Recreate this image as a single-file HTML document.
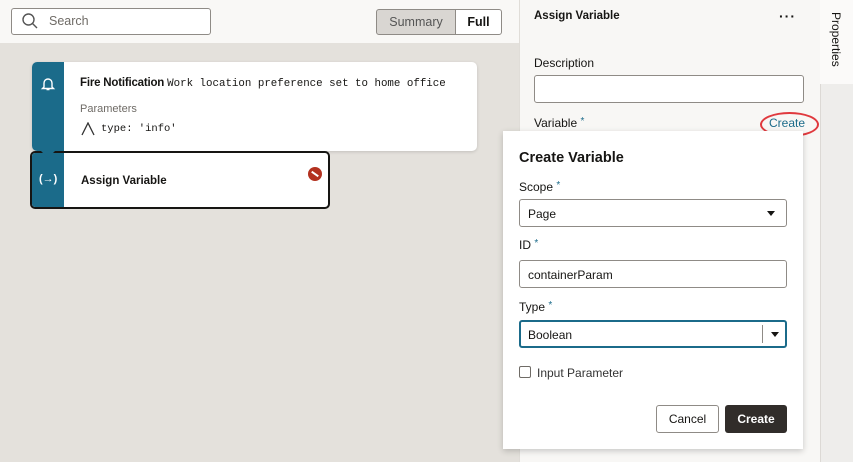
<!DOCTYPE html>
<html><head><style>
*{box-sizing:border-box;margin:0;padding:0}
body{width:853px;height:462px;overflow:hidden;font-family:"Liberation Sans",sans-serif;background:#e4e1dc;position:relative;color:#161513}
.abs{position:absolute}
.mono{font-family:"Liberation Mono",monospace}
</style></head><body>
<div class="abs" style="left:0;top:0;width:519px;height:43px;background:#f9f8f6"></div>
<div class="abs" style="left:11px;top:8px;width:200px;height:27px;border:1px solid #8f8b86;border-radius:3px;background:#fff"></div>
<svg class="abs" style="left:21px;top:12px" width="18" height="18" viewBox="0 0 18 18"><circle cx="7.5" cy="7.5" r="5.5" fill="none" stroke="#555" stroke-width="1.4"/><line x1="11.5" y1="11.5" x2="16" y2="16" stroke="#555" stroke-width="1.4"/></svg>
<div class="abs" style="left:49px;top:14px;font-size:12.5px;color:#6f6b66">Search</div>
<div class="abs" style="left:376px;top:9px;width:80px;height:26px;background:#d9d6d2;border:1px solid #8f8b86;border-radius:3px 0 0 3px;font-size:12.5px;color:#555;text-align:center;line-height:24px">Summary</div>
<div class="abs" style="left:455px;top:9px;width:47px;height:26px;background:#fff;border:1px solid #8f8b86;border-radius:0 3px 3px 0;font-size:12.5px;font-weight:bold;text-align:center;line-height:24px">Full</div>

<div class="abs" style="left:32px;top:62px;width:445px;height:89px;background:#fff;border-radius:5px;box-shadow:0 1px 3px rgba(0,0,0,.15);overflow:hidden">
 <div class="abs" style="left:0;top:0;width:32px;height:89px;background:#1b6b8a"></div>
 <svg class="abs" style="left:8px;top:14px" width="16" height="16" viewBox="0 0 16 16"><path d="M4 11V7a4 4 0 0 1 8 0v4l1.5 1.5h-11z M6.5 13.5h3" fill="none" stroke="#fff" stroke-width="1.4"/></svg>
 <div class="abs" style="left:48px;top:15px;font-size:11.5px;white-space:nowrap;letter-spacing:-0.2px"><b>Fire Notification</b> <span class="mono" style="font-size:10.8px;letter-spacing:0">Work location preference set to home office</span></div>
 <div class="abs" style="left:48px;top:41px;font-size:11px;color:#6f6b66">Parameters</div>
 <svg class="abs" style="left:49px;top:60px" width="15" height="14" viewBox="0 0 15 14"><path d="M1 13L7 1l6 12" fill="none" stroke="#333" stroke-width="1.3"/></svg>
 <div class="abs mono" style="left:69px;top:61px;font-size:10.5px">type: 'info'</div>
</div>
<div class="abs" style="left:30px;top:151px;width:300px;height:58px;background:#fff;border:2px solid #161513;border-radius:5px;overflow:hidden">
 <div class="abs" style="left:0;top:0;width:32px;height:58px;background:#1b6b8a"></div>
 <div class="abs" style="left:7px;top:20px;color:#fff;font-size:11px;font-weight:bold">(→)</div>
 <div class="abs" style="left:49px;top:22px;font-size:11.5px;font-weight:bold">Assign Variable</div>
 <div class="abs" style="left:276px;top:14px;width:14px;height:14px;border-radius:7px;background:#b3311f"></div>
 <div class="abs" style="left:279px;top:20px;width:8px;height:2px;background:#fff;transform:rotate(35deg)"></div>
</div>
<div class="abs" style="left:41px;top:151px;width:0;height:0;border-left:7px solid transparent;border-right:7px solid transparent;border-top:7px solid #1b6b8a"></div>

<div class="abs" style="left:519px;top:0;width:301px;height:462px;background:#f8f7f5;border-left:1px solid #e0ddd8"></div>
<div class="abs" style="left:534px;top:10px;font-size:11.5px;font-weight:bold">Assign Variable</div>
<div class="abs" style="left:779px;top:8px;font-size:14px;font-weight:bold;letter-spacing:1px">···</div>
<div class="abs" style="left:534px;top:56px;font-size:12px">Description</div>
<div class="abs" style="left:534px;top:75px;width:270px;height:28px;background:#fff;border:1px solid #8f8b86;border-radius:3px"></div>
<div class="abs" style="left:534px;top:116px;font-size:12px">Variable <span style="color:#1b6b8a;font-size:10px;vertical-align:top">*</span></div>
<div class="abs" style="left:769px;top:116px;font-size:12px;color:#1b6b8a">Create</div>
<div class="abs" style="left:760px;top:112px;width:59px;height:25px;border:2px solid #e0393e;border-radius:50%"></div>
<div class="abs" style="left:820px;top:0;width:33px;height:84px;background:#fbfaf9"></div>
<div class="abs" style="left:820px;top:84px;width:33px;height:378px;background:#eeedeb;border-left:1px solid #dcd9d5"></div>
<div class="abs" style="left:829px;top:12px;font-size:12px;writing-mode:vertical-rl">Properties</div>

<div class="abs" style="left:503px;top:131px;width:300px;height:318px;background:#fff;box-shadow:0 2px 6px rgba(0,0,0,.2)">
 <div class="abs" style="left:16px;top:19px;font-size:14.5px;font-weight:bold">Create Variable</div>
 <div class="abs" style="left:16px;top:49px;font-size:12px">Scope <span style="color:#1b6b8a;font-size:10px;vertical-align:top">*</span></div>
 <div class="abs" style="left:16px;top:68px;width:268px;height:28px;border:1px solid #8f8b86;border-radius:3px;font-size:12px;padding:7px 8px">Page</div>
 <div class="abs" style="left:264px;top:80px;border-left:4px solid transparent;border-right:4px solid transparent;border-top:5px solid #161513"></div>
 <div class="abs" style="left:16px;top:107px;font-size:12px">ID <span style="color:#1b6b8a;font-size:10px;vertical-align:top">*</span></div>
 <div class="abs" style="left:16px;top:129px;width:268px;height:28px;border:1px solid #8f8b86;border-radius:3px;font-size:12px;padding:7px 8px">containerParam</div>
 <div class="abs" style="left:16px;top:169px;font-size:12px">Type <span style="color:#1b6b8a;font-size:10px;vertical-align:top">*</span></div>
 <div class="abs" style="left:16px;top:189px;width:268px;height:28px;border:2px solid #1b6b8a;border-radius:3px;font-size:12px;padding:6px 7px">Boolean</div>
 <div class="abs" style="left:259px;top:194px;width:1px;height:18px;background:#8f8b86"></div>
 <div class="abs" style="left:268px;top:201px;border-left:4px solid transparent;border-right:4px solid transparent;border-top:5px solid #161513"></div>
 <div class="abs" style="left:16px;top:235px;width:12px;height:12px;border:1px solid #6f6b66;border-radius:2px"></div>
 <div class="abs" style="left:34px;top:235px;font-size:12px;color:#333">Input Parameter</div>
 <div class="abs" style="left:153px;top:274px;width:63px;height:28px;border:1px solid #8f8b86;border-radius:3px;font-size:12px;text-align:center;line-height:26px">Cancel</div>
 <div class="abs" style="left:222px;top:274px;width:62px;height:28px;background:#312d2a;border-radius:3px;font-size:12px;font-weight:bold;color:#fff;text-align:center;line-height:28px">Create</div>
</div>
</body></html>
